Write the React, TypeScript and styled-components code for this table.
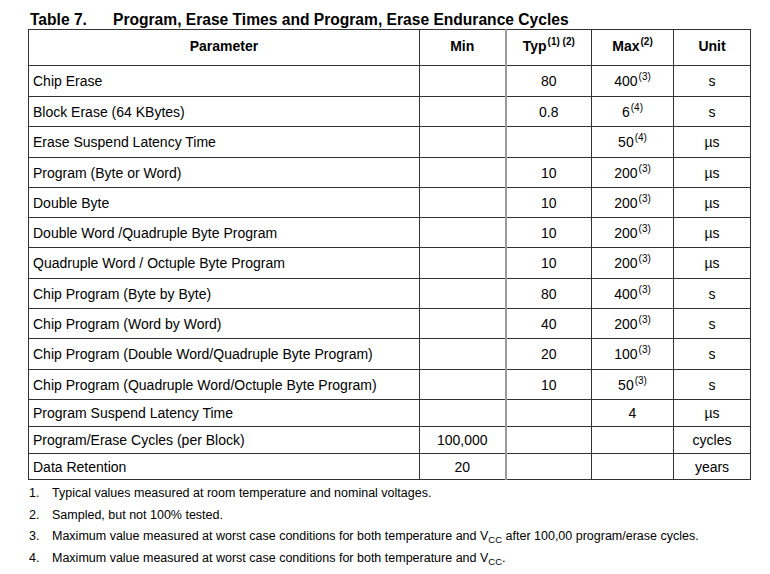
import React from "react";
import styled, { createGlobalStyle } from "styled-components";

const Global = createGlobalStyle`
  html, body { margin: 0; padding: 0; background: #fff; }
  body { font-family: "Liberation Sans", Arial, sans-serif; color: #000; }
`;

const Page = styled.div`
  padding: 10px 20px 0 28px;
  width: 722px;
`;

const Title = styled.div`
  display: flex;
  font-weight: bold;
  font-size: 15.6px;
  line-height: 19px;
  height: 19px;
  padding-left: 2px;
`;

const TitleNum = styled.span`
  width: 83px;
`;

const Table = styled.table`
  border-collapse: collapse;
  width: 722px;
  table-layout: fixed;
  font-size: 14px;
  border-top: 1px solid #888;
  border-left: 1px solid #777;
`;

const Col = styled.col<{ $w: number }>`
  width: ${(p) => p.$w}px;
`;

const Row = styled.tr<{ $h: number }>`
  height: ${(p) => p.$h}px;
`;

const HeadCell = styled.th<{ $grey?: boolean; $light?: boolean }>`
  font-weight: bold;
  text-align: center;
  vertical-align: middle;
  padding: 0 0 4px;
  border: 1px solid #333;
  ${(p) => (p.$grey ? "border-left: 2px solid #9a9a9a;" : "")}
  ${(p) => (p.$light ? "border-left: 1px solid #8a8a8a;" : "")}
`;

const Cell = styled.td<{ $grey?: boolean; $light?: boolean }>`
  text-align: center;
  vertical-align: middle;
  padding: 0;
  border: 1px solid #333;
  ${(p) => (p.$grey ? "border-left: 2px solid #9a9a9a;" : "")}
  ${(p) => (p.$light ? "border-left: 1px solid #8a8a8a;" : "")}
`;

const ParamCell = styled(Cell)`
  text-align: left;
  padding-left: 4px;
`;

const Sup = styled.sup`
  font-size: 10px;
  vertical-align: 0;
  position: relative;
  top: -6px;
  margin-left: 1px;
`;

const Notes = styled.ol`
  list-style: none;
  margin: 6px 0 0;
  padding: 0;
  font-size: 12.5px;
`;

const Note = styled.li`
  display: flex;
  height: 21.5px;
  line-height: 14px;
`;

const NoteNum = styled.span`
  width: 23px;
  padding-left: 1px;
`;

const Sub = styled.sub`
  font-size: 9.5px;
  vertical-align: -3px;
`;

type R = { p: string; min?: string; typ?: string; max?: string; sup?: string; unit: string; h: number };

const rows: R[] = [
  { p: "Chip Erase", typ: "80", max: "400", sup: "(3)", unit: "s", h: 31 },
  { p: "Block Erase (64 KBytes)", typ: "0.8", max: "6", sup: "(4)", unit: "s", h: 30 },
  { p: "Erase Suspend Latency Time", max: "50", sup: "(4)", unit: "µs", h: 31 },
  { p: "Program (Byte or Word)", typ: "10", max: "200", sup: "(3)", unit: "µs", h: 30 },
  { p: "Double Byte", typ: "10", max: "200", sup: "(3)", unit: "µs", h: 30 },
  { p: "Double Word /Quadruple Byte Program", typ: "10", max: "200", sup: "(3)", unit: "µs", h: 30 },
  { p: "Quadruple Word / Octuple Byte Program", typ: "10", max: "200", sup: "(3)", unit: "µs", h: 31 },
  { p: "Chip Program (Byte by Byte)", typ: "80", max: "400", sup: "(3)", unit: "s", h: 30 },
  { p: "Chip Program (Word by Word)", typ: "40", max: "200", sup: "(3)", unit: "s", h: 30 },
  { p: "Chip Program (Double Word/Quadruple Byte Program)", typ: "20", max: "100", sup: "(3)", unit: "s", h: 31 },
  { p: "Chip Program (Quadruple Word/Octuple Byte Program)", typ: "10", max: "50", sup: "(3)", unit: "s", h: 30 },
  { p: "Program Suspend Latency Time", max: "4", unit: "µs", h: 27 },
  { p: "Program/Erase Cycles (per Block)", min: "100,000", unit: "cycles", h: 27 },
  { p: "Data Retention", min: "20", unit: "years", h: 26 },
];

export default function App() {
  return (
    <Page>
      <Global />
      <Title>
        <TitleNum>Table 7.</TitleNum>
        <span>Program, Erase Times and Program, Erase Endurance Cycles</span>
      </Title>
      <Table>
        <colgroup>
          <Col $w={391} />
          <Col $w={86} />
          <Col $w={86} />
          <Col $w={82} />
          <Col $w={77} />
        </colgroup>
        <thead>
          <Row $h={36}>
            <HeadCell>Parameter</HeadCell>
            <HeadCell>Min</HeadCell>
            <HeadCell $grey>
              Typ<Sup>(1) (2)</Sup>
            </HeadCell>
            <HeadCell $light>
              Max<Sup>(2)</Sup>
            </HeadCell>
            <HeadCell>Unit</HeadCell>
          </Row>
        </thead>
        <tbody>
          {rows.map((r) => (
            <Row key={r.p} $h={r.h}>
              <ParamCell>{r.p}</ParamCell>
              <Cell>{r.min}</Cell>
              <Cell $grey>{r.typ}</Cell>
              <Cell $light>
                {r.max}
                {r.sup && <Sup>{r.sup}</Sup>}
              </Cell>
              <Cell>{r.unit}</Cell>
            </Row>
          ))}
        </tbody>
      </Table>
      <Notes>
        <Note>
          <NoteNum>1.</NoteNum>
          <span>Typical values measured at room temperature and nominal voltages.</span>
        </Note>
        <Note>
          <NoteNum>2.</NoteNum>
          <span>Sampled, but not 100% tested.</span>
        </Note>
        <Note>
          <NoteNum>3.</NoteNum>
          <span>
            Maximum value measured at worst case conditions for both temperature and V<Sub>CC</Sub> after 100,00
            program/erase cycles.
          </span>
        </Note>
        <Note>
          <NoteNum>4.</NoteNum>
          <span>
            Maximum value measured at worst case conditions for both temperature and V<Sub>CC</Sub>.
          </span>
        </Note>
      </Notes>
    </Page>
  );
}
